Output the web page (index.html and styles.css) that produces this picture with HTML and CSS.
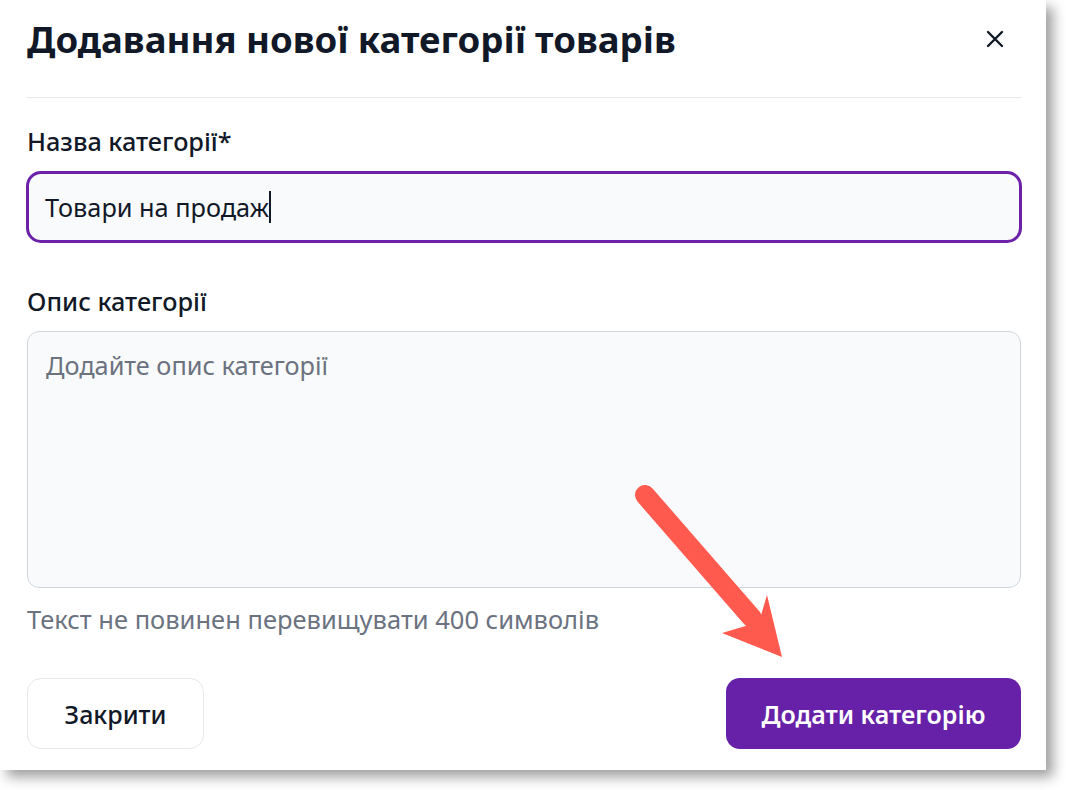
FILE: index.html
```html
<!DOCTYPE html>
<html lang="uk">
<head>
<meta charset="utf-8">
<title>Додавання нової категорії товарів</title>
<link rel="stylesheet" href="styles.css">
</head>
<body>
<div class="dialog">
  <header class="dialog-header">
    <h1 class="dialog-title">Додавання нової категорії товарів</h1>
    <button class="close-btn" aria-label="Закрити">
      <svg width="18" height="18" viewBox="0 0 18 18"><path d="M2 2 L16 16 M16 2 L2 16" stroke="#111827" stroke-width="2.4" stroke-linecap="round" fill="none"/></svg>
    </button>
  </header>
  <div class="field field-name">
    <label class="field-label">Назва категорії*</label>
    <div class="text-input" role="textbox">Товари на продаж<span class="caret"></span></div>
  </div>
  <div class="field field-desc">
    <label class="field-label">Опис категорії</label>
    <textarea class="text-area" placeholder="Додайте опис категорії"></textarea>
  </div>
  <p class="helper">Текст не повинен перевищувати 400 символів</p>
  <footer class="actions">
    <button class="btn btn-secondary">Закрити</button>
    <button class="btn btn-primary">Додати категорію</button>
  </footer>
  <svg class="arrow" width="180" height="200" viewBox="0 0 180 200">
    <line x1="25" y1="25" x2="132" y2="148" stroke="#ff5a4d" stroke-width="20" stroke-linecap="round"/>
    <polygon points="162,187 102,163 139,152 147,125" fill="#ff5a4d"/>
  </svg>
</div>
</body>
</html>
```

FILE: styles.css
```css
* { box-sizing: border-box; }
html, body { margin: 0; padding: 0; background: #ffffff; }
body {
  font-family: "Noto Sans", "Open Sans", sans-serif;
  color: #111827;
  width: 1066px;
  height: 790px;
  overflow: hidden;
}
.dialog {
  position: relative;
  width: 1046px;
  height: 770px;
  background: #ffffff;
  padding: 0 25px 21px 27px;
  box-shadow: 7px 7px 12px rgba(0, 0, 0, 0.38);
  display: flex;
  flex-direction: column;
}
.dialog-header {
  display: flex;
  align-items: center;
  justify-content: space-between;
  padding-top: 15px;
  padding-bottom: 34px;
  border-bottom: 1px solid #e5e7eb;
}
.dialog-title {
  margin: 0;
  font-size: 36.6px;
  line-height: 48px;
  font-weight: 700;
  color: #111827;
}
.close-btn {
  border: 0;
  background: none;
  padding: 0;
  margin-right: 17px;
  width: 18px;
  height: 18px;
  display: flex;
}
.field { display: flex; flex-direction: column; }
.field-name { margin-top: 26px; }
.field-desc { margin-top: 41px; }
.field-label {
  font-size: 25.3px;
  line-height: 34px;
  font-weight: 500;
  color: #111827;
  margin-bottom: 13px;
}
.text-input {
  margin: 0 -1px;
  height: 72px;
  border: 3px solid #6b21a8;
  border-radius: 15px;
  background: #f9fafb;
  padding: 0 16px;
  display: flex;
  align-items: center;
  font-size: 25.3px;
  color: #111827;
}
.caret {
  display: inline-block;
  width: 2px;
  height: 32px;
  background: #111827;
}
.text-area {
  display: block;
  width: 100%;
  height: 257px;
  border: 1px solid #d1d5db;
  border-radius: 12px;
  background: #f9fafb;
  padding: 16px 18px;
  font-family: inherit;
  font-size: 25.3px;
  line-height: 34px;
  color: #111827;
  resize: none;
  outline: none;
}
.text-area::placeholder { color: #6b7280; opacity: 1; }
.helper {
  margin: 14px 0 0 0;
  font-size: 25.5px;
  line-height: 34px;
  color: #6b7280;
}
.actions {
  margin-top: auto;
  display: flex;
  justify-content: space-between;
}
.btn {
  height: 71px;
  border-radius: 14px;
  font-family: inherit;
  font-size: 25px;
  padding: 0;
}
.btn-secondary {
  width: 177px;
  background: #ffffff;
  border: 1px solid #e5e7eb;
  color: #111827;
  font-weight: 500;
}
.btn-primary {
  width: 295px;
  background: #6621a8;
  border: 0;
  color: #ffffff;
  font-weight: 600;
}
.arrow {
  position: absolute;
  left: 620px;
  top: 470px;
}
```
